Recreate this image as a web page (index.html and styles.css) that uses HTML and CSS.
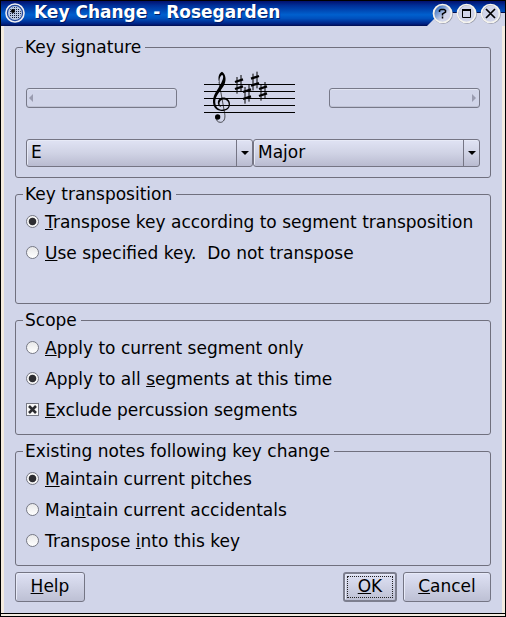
FILE: index.html
```
<!DOCTYPE html>
<html lang="en">
<head>
<meta charset="utf-8">
<title>Key Change - Rosegarden</title>
<link rel="stylesheet" href="styles.css">
</head>
<body>
<div class="window">
  <header class="titlebar">
    <svg class="app-icon" width="22" height="22" viewBox="0 0 22 22">
      <defs><pattern id="dots" width="2" height="2" patternUnits="userSpaceOnUse"><rect width="1" height="1" fill="#111c38"/></pattern></defs>
      <circle cx="11" cy="12" r="9" fill="#20479c" stroke="#eeeef2" stroke-width="1.6"/>
      <circle cx="11" cy="12" r="7" fill="#b9cae4"/>
      <circle cx="11" cy="12" r="6" fill="url(#dots)"/>
      <circle cx="9" cy="10" r="2" fill="#000"/>
    </svg>
    <h1>Key Change - Rosegarden</h1>
    <svg class="controls" width="78" height="25" viewBox="427 1 78 25">
      <defs><linearGradient id="glass" x1="0.1" y1="0.1" x2="0.6" y2="0.6"><stop offset="0.2" stop-color="#4b7fc8"/><stop offset="1" stop-color="#d1d5e9"/></linearGradient></defs>
      <path d="M427 26L435 18Q440 12 447 12H505V26Z" fill="#d1d5e9"/>
      <path d="M435 17.5Q440 12.5 447 12.5H505" fill="none" stroke="#02104e"/>
      <g fill="#d1d5e9" stroke="#9295a5" stroke-width="1.5">
        <circle cx="443" cy="14" r="9.200" fill="url(#glass)"/><circle cx="467" cy="14" r="9.200"/><circle cx="491" cy="14" r="9.200"/>
      </g>
      <g fill="none" stroke="#f4f3ee" stroke-width="1.7">
        <circle cx="442.500" cy="13.500" r="9"/><circle cx="466.500" cy="13.500" r="9"/><circle cx="490.500" cy="13.500" r="9"/>
      </g>
      <path d="M439.500 12V10.500L441 9.500H444L445.500 10.500V12L442.500 14V15.500M442.500 16.500V18.500" fill="none" stroke="#000" stroke-width="1.500"/>
      <path d="M462.500 9V17.500H470.500V9M462 10H471" fill="none" stroke="#000" stroke-width="1"/>
      <path d="M462 10H471" stroke="#000" stroke-width="2"/>
      <path d="M486 9L495 18M495 9L486 18" stroke="#000" stroke-width="1.700"/>
    </svg>
  </header>
  <main>
    <section class="group key">
      <h2>Key signature</h2>
      <div class="notation">
        <button class="scroll left"><svg width="4" height="8"><path d="M4 0V8L0 4Z" fill="#9a9cb0"/></svg></button>
        <svg class="staff" width="120" height="70" viewBox="0 0 360 210">
          <path d="M42 73.500H315M42 94.500H315M42 115.500H315M42 136.500H315M42 157.500H315" stroke="#000" stroke-width="3"/>
          <path fill-rule="evenodd" d="M96 35C107 42 110 58 103 74C96 89 80 101 76 120C74 137 82 148 95 149C110 149 117 142 116 132C115 121 104 116 95 120C87 124 86 135 95 142C83 139 80 125 88 117C100 107 120 115 120 132C120 146 110 153 94 153C77 152 68 139 69 121C71 99 87 85 94 68C101 55 101 47 96 45C90 48 87 58 89 70C82 55 86 40 96 35Z"/>
          <path d="M87 66L104 160C107 177 101 187 91 187C83 187 78 180 78 173" fill="none" stroke="#000" stroke-width="2"/>
          <circle cx="83" cy="171" r="8"/>
          <g stroke="#000" fill="none">
            <g id="sharp"><path d="M141 51V101M153 45V95" stroke-width="3"/><path d="M135 66L159 58M135 87L159 79" stroke-width="7"/></g>
            <use href="#sharp" x="24" y="30"/><use href="#sharp" x="48" y="-10"/><use href="#sharp" x="72" y="21"/>
          </g>
        </svg>
        <button class="scroll right"><svg width="4" height="8"><path d="M0 0V8L4 4Z" fill="#9a9cb0"/></svg></button>
      </div>
      <div class="combos">
        <div class="combo"><span>E</span><i><svg width="8" height="4"><path d="M0 0H8L4 4Z"/></svg></i></div>
        <div class="combo"><span>Major</span><i><svg width="8" height="4"><path d="M0 0H8L4 4Z"/></svg></i></div>
      </div>
    </section>
    <section class="group transposition">
      <h2>Key transposition</h2>
      <div class="option"><b class="radio on"></b><span><u>T</u>ranspose key according to segment transposition</span></div>
      <div class="option"><b class="radio"></b><span><u>U</u>se specified key.&nbsp; Do not transpose</span></div>
    </section>
    <section class="group">
      <h2>Scope</h2>
      <div class="option"><b class="radio"></b><span><u>A</u>pply to current segment only</span></div>
      <div class="option"><b class="radio on"></b><span>Apply to all <u>s</u>egments at this time</span></div>
      <div class="option"><b class="check"><svg width="11" height="11"><path d="M2 2L9 9M9 2L2 9" stroke="#2b2b2f" stroke-width="2.600"/></svg></b><span><u>E</u>xclude percussion segments</span></div>
    </section>
    <section class="group">
      <h2>Existing notes following key change</h2>
      <div class="option"><b class="radio on"></b><span><u>M</u>aintain current pitches</span></div>
      <div class="option"><b class="radio"></b><span>Mai<u>n</u>tain current accidentals</span></div>
      <div class="option"><b class="radio"></b><span>Transpose <u>i</u>nto this key</span></div>
    </section>
    <footer>
      <button class="btn help"><u>H</u>elp</button>
      <button class="btn ok"><span><u>O</u>K</span></button>
      <button class="btn cancel"><u>C</u>ancel</button>
    </footer>
  </main>
</div>
</body>
</html>
```
FILE: styles.css
```
* { box-sizing: border-box; }
body { margin: 0; font: 17px/20px "DejaVu Sans", sans-serif; color: #000; }
svg { display: block; flex: none; }
button { padding: 0; font: inherit; color: inherit; }
u { text-underline-offset: 1px; text-decoration-thickness: 1px; text-decoration-skip-ink: none; }
.window { width: 506px; height: 617px; border: 1px solid #000; background: #f3ebe0; overflow: hidden; }
.titlebar { display: flex; height: 25px; background: linear-gradient(#02106c 0, #002f98 18%, #0060ce 55%, #0050bd 70%, #001f80 92%, #000d4e 100%); }
.app-icon { margin-left: 3px; }
h1 { margin: 1px 0 0 8px; font: bold 17px/20px "DejaVu Sans", sans-serif; color: #fff; white-space: nowrap; text-shadow: 1px 1px #001b66; }
.controls { margin-left: auto; }
main { height: 588px; margin: 0 3px; padding: 21px 11px 0; background: #d1d5e9; }
.window::after { content: ""; display: block; height: 1px; margin-top: -1px; background: #000; }
.group { height: 115px; margin-bottom: 16px; border: 1px solid #70707e; border-radius: 3px; padding: 0 10px; }
.key { height: 131px; }
.transposition { height: 110px; }
h2 { width: fit-content; height: 20px; margin: -11px 0 2px -3px; padding: 0 4px 0 2px; background: #d1d5e9; font: inherit; white-space: nowrap; }
.notation { display: flex; justify-content: space-between; height: 70px; margin-top: 2px; padding-top: 1px; }
.key h2 { margin-bottom: 0; }
.staff { margin-left: -6px; }
.scroll { display: flex; align-items: center; width: 151px; height: 20px; margin-top: 28px; border: 1px solid #777989; border-radius: 3px; background: #d1d5e9; box-shadow: inset 0 1px #e2e5f3, inset 0 -1px #bfc2d4; }
.scroll.left { padding-left: 2px; }
.scroll.right { justify-content: flex-end; padding-right: 3px; }
.combos { display: flex; margin-top: 10px; }
.combo { display: flex; width: 227px; height: 28px; border: 1px solid #757584; border-radius: 3px; background: linear-gradient(#e0e3f4, #d0d3e5 50%, #b9bbd0); box-shadow: inset 1px 1px #e7eaf7; }
.combo span { flex: 1; padding: 2px 0 0 4px; }
.combo i { display: flex; align-items: center; justify-content: center; width: 16px; border-left: 1px solid #757584; }
.option { display: flex; align-items: center; height: 31px; white-space: nowrap; }
.radio, .check { flex: none; display: flex; width: 13px; height: 13px; margin-right: 6px; border: 1px solid #777985; }
.radio { border-radius: 50%; background: linear-gradient(#e8e8e9, #fff); }
.radio.on { background: radial-gradient(circle, #2d2d31 0, #2d2d31 3.400px, #f5f5f5 4.200px); }
.check { background: #f8f8f9; }
footer { display: flex; margin-top: -10px; }
.btn { height: 30px; padding-bottom: 2px; border: 1px solid #747584; border-radius: 3px; background: linear-gradient(#dee1f4, #ced1e4 50%, #bdc0d4); box-shadow: inset 1px 1px #e7eaf8; }
.help { width: 70px; }
.ok { width: 54px; margin-left: auto; padding: 2px; border: 2px solid #7d7f8f; }
.ok span { display: block; height: 22px; border: 1px dotted #222; line-height: 19px; }
.cancel { width: 88px; margin-left: 6px; }
```
